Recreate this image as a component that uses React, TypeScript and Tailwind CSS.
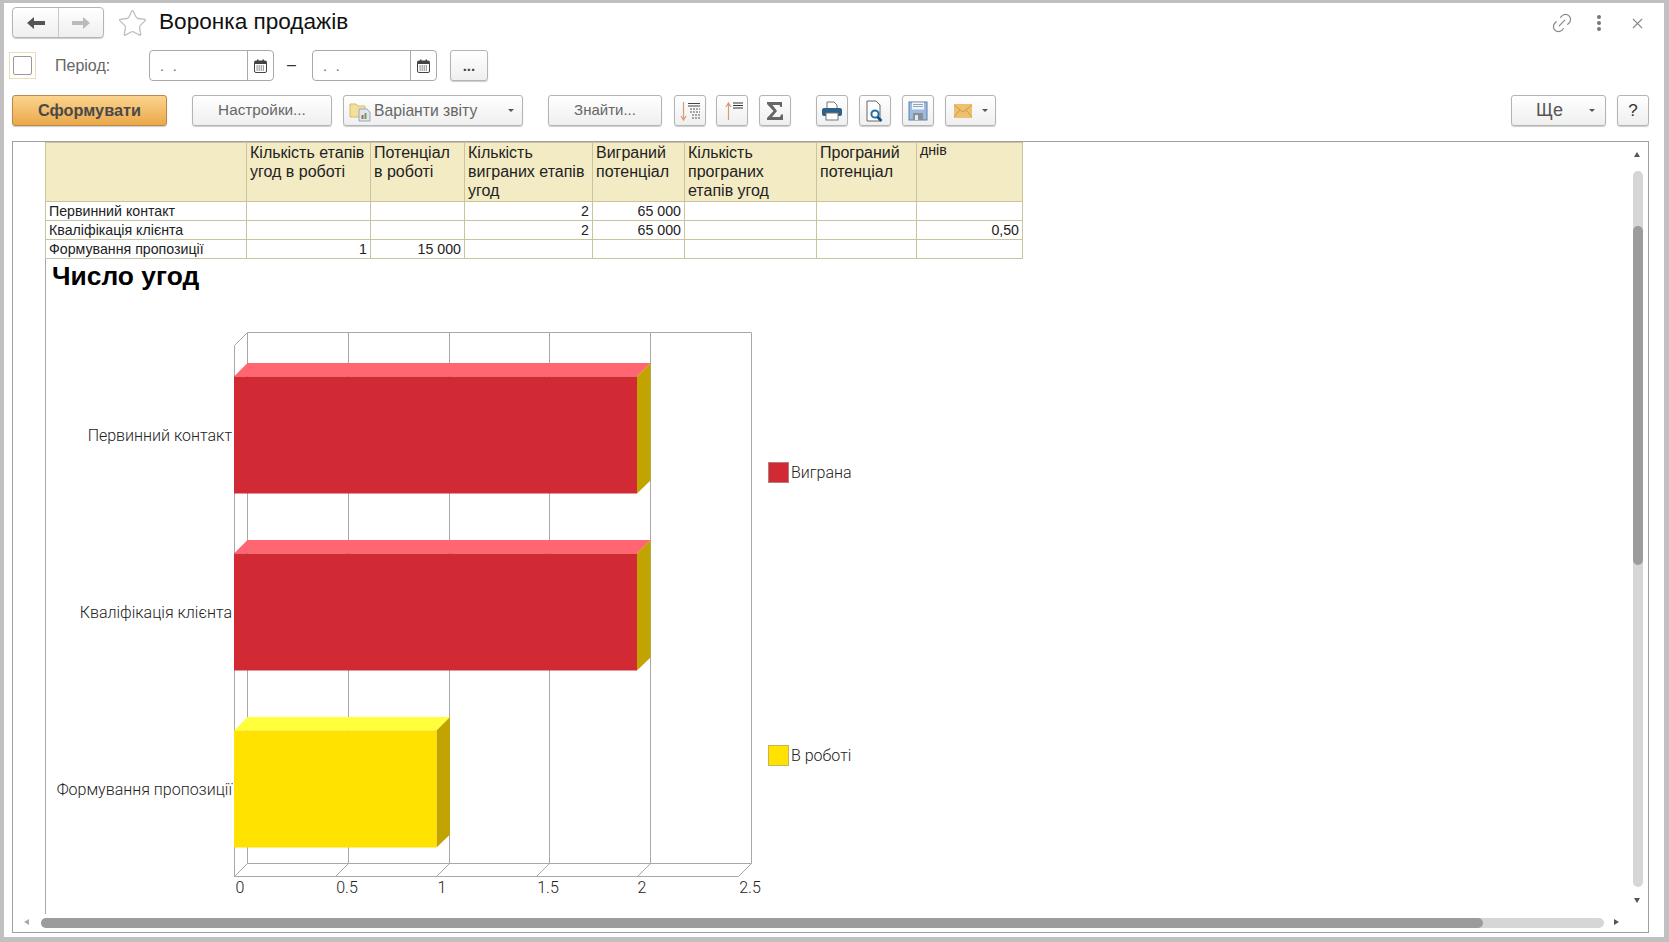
import { ReactNode } from 'react'
import { Link2, Star, X } from 'lucide-react'

const COLS = [201, 124, 94, 128, 92, 132, 100, 106]

const HEADERS = [
  '',
  'Кількість етапів угод в роботі',
  'Потенціал в роботі',
  'Кількість виграних етапів угод',
  'Виграний потенціал',
  'Кількість програних етапів угод',
  'Програний потенціал',
  'днів',
]

const ROWS = [
  ['Первинний контакт', '', '', '2', '65 000', '', '', ''],
  ['Кваліфікація клієнта', '', '', '2', '65 000', '', '', '0,50'],
  ['Формування пропозиції', '1', '15 000', '', '', '', '', ''],
]

const BARS = [
  { y: 376.5, right: 637, front: '#d22a35', top: '#ff6672', side: '#c2a400', label: 'Первинний контакт' },
  { y: 553.5, right: 637, front: '#d22a35', top: '#ff6672', side: '#c2a400', label: 'Кваліфікація клієнта' },
  { y: 730.5, right: 436.5, front: '#ffe200', top: '#ffff3c', side: '#c2a400', label: 'Формування пропозиції' },
]

const TICKS = [
  { label: '0', x: 240 },
  { label: '0.5', x: 347 },
  { label: '1', x: 442 },
  { label: '1.5', x: 548 },
  { label: '2', x: 642 },
  { label: '2.5', x: 750 },
]

function Btn({ className = '', children }: { className?: string; children?: ReactNode }) {
  return (
    <div
      className={`flex h-[31px] items-center rounded-[3px] border border-[#b4b4b4] bg-gradient-to-b from-white to-[#efefef] shadow-[0_1px_1px_rgba(0,0,0,.2)] ${className}`}
    >
      {children}
    </div>
  )
}

function Caret() {
  return <span className="h-0 w-0 border-x-[3px] border-t-[3px] border-x-transparent border-t-[#555]" />
}

function CalendarIcon() {
  return (
    <svg width="13" height="14" viewBox="0 0 13 14">
      <rect x="0.5" y="2" width="12" height="11.5" rx="1.5" fill="#fff" stroke="#444" />
      <rect x="0.5" y="2" width="12" height="3" fill="#444" />
      <rect x="3" y="0.5" width="1.5" height="3" fill="#444" />
      <rect x="8.5" y="0.5" width="1.5" height="3" fill="#444" />
      <path d="M2.5 7h8M2.5 9h8M2.5 11h8" stroke="#444" strokeDasharray="1.2 0.9" />
    </svg>
  )
}

function DateInput() {
  return (
    <div className="flex h-[31px] w-[125px] rounded-[4px] border border-[#a9a9a9] bg-white">
      <div className="flex-1 pl-[10px] pt-[5px] text-[14px] leading-5 tracking-[2.5px] text-[#666]">. .</div>
      <div className="flex w-[26px] items-center justify-center border-l border-[#a9a9a9]">
        <CalendarIcon />
      </div>
    </div>
  )
}

function NavArrow({ flip, color }: { flip?: boolean; color: string }) {
  return (
    <svg width="18" height="14" viewBox="0 0 18 14" className={flip ? 'rotate-180' : ''}>
      <path d="M0 7l7-6v4h11v4H7v4z" fill={color} />
    </svg>
  )
}

function SortDownIcon() {
  return (
    <svg width="24" height="24" viewBox="0 0 24 24">
      <path d="M5.5 3v17M3 17l2.5 4L8 17" fill="none" stroke="#d99a78" strokeWidth="1.2" />
      <path d="M10 4.5h12M10 7h12" stroke="#444" strokeWidth="1.2" />
      <path d="M12 10h10M12 13h10M14 16h8M14 19h8" stroke="#555" strokeWidth="1.1" strokeDasharray="2 1" />
    </svg>
  )
}

function SortUpIcon() {
  return (
    <svg width="24" height="24" viewBox="0 0 24 24">
      <path d="M8.5 21V4M6 8l2.5-4L11 8" fill="none" stroke="#d99a78" strokeWidth="1.2" />
      <path d="M13 4h10M13 6.5h10M13 9h10" stroke="#333" strokeWidth="1.2" />
    </svg>
  )
}

function SumIcon() {
  return (
    <svg width="18" height="20" viewBox="0 0 18 20">
      <path d="M1 1h15v5h-1.5l-1-2H6.5L11 10l-5 6h8l1-2.5H17V19H1v-2l6.5-7L1 3z" fill="#666" />
    </svg>
  )
}

function PrintIcon() {
  return (
    <svg width="22" height="22" viewBox="0 0 22 22">
      <path d="M6 2h7l3 3v5H6z" fill="#fff" stroke="#777" />
      <rect x="1" y="8" width="20" height="8" rx="2" fill="#2f5f88" />
      <rect x="5" y="13" width="12" height="7" fill="#fff" stroke="#777" />
    </svg>
  )
}

function PreviewIcon() {
  return (
    <svg width="22" height="24" viewBox="0 0 22 24">
      <path d="M3 2h9l4 4v16H3z" fill="#fff" stroke="#666" />
      <circle cx="11" cy="15" r="3.6" fill="#fff" stroke="#1f6fa8" strokeWidth="2" />
      <path d="M13.5 18l4 4" stroke="#174e78" strokeWidth="2.6" />
    </svg>
  )
}

function SaveIcon() {
  return (
    <svg width="20" height="20" viewBox="0 0 20 20">
      <rect x="1" y="1" width="18" height="18" fill="#9dbbe0" stroke="#5c7ea8" />
      <rect x="4" y="1.5" width="12" height="7" fill="#f4f6f8" />
      <path d="M5 3.5h10M5 5.5h10" stroke="#8aa6c6" />
      <rect x="5" y="12" width="10" height="7" fill="#8a8f96" />
      <rect x="7" y="14" width="3" height="5" fill="#e8e8e8" />
    </svg>
  )
}

function MailIcon() {
  return (
    <svg width="18" height="14" viewBox="0 0 18 14">
      <rect x="0" y="0" width="18" height="14" fill="#eec170" />
      <path d="M0 1l9 7 9-7M0 13l6-7M18 13l-6-7" fill="none" stroke="#cf9a45" />
    </svg>
  )
}

function FolderIcon() {
  return (
    <svg width="22" height="22" viewBox="0 0 22 22">
      <path d="M1 4h6l2 2h7v11H1z" fill="#f1df9a" stroke="#d3bd72" />
      <path d="M10 9h8l3 3v9H10z" fill="#dfe6ee" stroke="#9aa8b8" />
      <rect x="12.5" y="15" width="2" height="4" fill="#c05a4a" />
      <rect x="15.5" y="13" width="2" height="6" fill="#6f9c5b" />
    </svg>
  )
}

function Chart() {
  return (
    <svg width="840" height="640" viewBox="45 258 840 640" className="-ml-px block" fontFamily="Roboto, sans-serif" fontWeight="300">
      <g stroke="#a8a8a8" fill="none" strokeWidth="1">
        <path d="M247.5 332.5H751.5V863.5H247.5zM247.5 332.5L234.5 345.5V876.5H738.5L751.5 863.5" />
        <path d="M234.5 876.5L247.5 863.5" />
        {[348.5, 449.5, 549.5, 650.5].map((x) => (
          <path key={x} d={`M${x} 332.5V863.5L${x - 13} 876.5`} />
        ))}
      </g>
      {BARS.map((b) => (
        <g key={b.label}>
          <path d={`M234 ${b.y}L247.5 ${b.y - 13.5}H${b.right + 13.5}L${b.right} ${b.y}z`} fill={b.top} />
          <path d={`M${b.right} ${b.y}L${b.right + 13.5} ${b.y - 13.5}V${b.y + 104}L${b.right} ${b.y + 117}z`} fill={b.side} />
          <rect x="234" y={b.y} width={b.right - 234} height="117" fill={b.front} />
          <text x="232" y={b.y + 64} textAnchor="end" fontSize="16" fill="#222">
            {b.label}
          </text>
        </g>
      ))}
      {TICKS.map((t) => (
        <text key={t.label} x={t.x} y="893" textAnchor="middle" fontSize="16" fill="#222">
          {t.label}
        </text>
      ))}
      <rect x="768.5" y="462.5" width="20" height="20" fill="#d22a35" stroke="#b08080" />
      <text x="791" y="478" fontSize="16" fill="#222">
        Виграна
      </text>
      <rect x="768.5" y="745.5" width="20" height="20" fill="#ffe200" stroke="#c8b45a" />
      <text x="791" y="761" fontSize="16" fill="#222">
        В роботі
      </text>
    </svg>
  )
}

function ReportTable() {
  return (
    <table className="-ml-px w-[977px] table-fixed border-collapse text-[14.2px] leading-[18px] text-[#222]">
      <colgroup>
        {COLS.map((w, i) => (
          <col key={i} style={{ width: w }} />
        ))}
      </colgroup>
      <thead>
        <tr className="h-[59px] bg-[#f3ebc4] align-top">
          {HEADERS.map((h, i) => (
            <th
              key={i}
              className={`border border-[#c9c49c] px-[3px] text-left font-normal ${i === 7 ? 'text-[14.2px] leading-[15px]' : 'text-[16px] leading-[19px]'}`}
            >
              {h}
            </th>
          ))}
        </tr>
      </thead>
      <tbody>
        {ROWS.map((row) => (
          <tr key={row[0]} className="h-[19px]">
            {row.map((c, i) => (
              <td
                key={i}
                className={`overflow-hidden whitespace-nowrap border border-[#c9c49c] px-[3px] py-0 ${i === 0 ? 'text-left' : 'text-right'}`}
              >
                {c}
              </td>
            ))}
          </tr>
        ))}
      </tbody>
    </table>
  )
}

export default function App() {
  return (
    <div className="h-[942px] w-[1669px] overflow-hidden bg-[#c0c0c0] pb-[5px] pl-[4px] pr-[5px] pt-[3px] font-['Liberation_Sans',sans-serif]">
      <div className="flex h-full flex-col bg-white">
        {/* Title bar */}
        <div className="flex h-[47px] items-start pl-[8px] pr-[18px] pt-[4px]">
          <div className="flex h-[31px] w-[92px] rounded-[4px] border border-[#b4b4b4] bg-gradient-to-b from-white to-[#efefef] shadow-[0_1px_1px_rgba(0,0,0,.2)]">
            <div className="flex w-[46px] items-center justify-center border-r border-[#c8c8c8]">
              <NavArrow color="#555" />
            </div>
            <div className="flex flex-1 items-center justify-center">
              <NavArrow flip color="#bbb" />
            </div>
          </div>
          <Star size={31} strokeWidth={1} className="ml-[13px] mt-[1px] text-[#bdbdbd]" />
          <h1 className="ml-[11px] text-[22.6px] font-normal leading-[30px] text-[#111]">Воронка продажів</h1>
          <div className="ml-auto flex items-center pt-[4px] text-[#888]">
            <Link2 size={24} strokeWidth={1.2} className="-rotate-45" />
            <div className="ml-[23px] flex w-[5px] flex-col gap-[2px]">
              <span className="h-[4px] w-[4px] rounded-full bg-[#777]" />
              <span className="h-[4px] w-[4px] rounded-full bg-[#777]" />
              <span className="h-[4px] w-[4px] rounded-full bg-[#777]" />
            </div>
            <X size={17} strokeWidth={1.5} className="ml-[27px]" />
          </div>
        </div>

        {/* Period row */}
        <div className="flex h-[45px] items-start pl-[5px]">
          <div className="mt-[2px] flex h-[27px] w-[27px] items-center justify-center border border-[#eadfb4]">
            <div className="h-[19px] w-[19px] rounded-[2px] border border-[#999]" />
          </div>
          <span className="ml-[19px] mt-[6px] w-[94px] text-[16px] leading-5 text-[#666]">Період:</span>
          <DateInput />
          <span className="ml-[13px] mr-[16px] mt-[5px] text-[16px] leading-5 text-[#333]">–</span>
          <DateInput />
          <Btn className="ml-[13px] w-[38px] justify-center pt-[2px] text-[15px] font-bold text-[#444]">...</Btn>
        </div>

        {/* Command bar */}
        <div className="flex h-[46px] items-start pl-[8px] pr-[15px] text-[#666]">
          <div className="flex h-[31px] w-[155px] items-center justify-center rounded-[3px] border border-[#b98a48] bg-gradient-to-b from-[#fbd48c] to-[#eba848] text-[16.3px] font-bold text-[#4a4a4a] shadow-[0_1px_1px_rgba(0,0,0,.2)]">
            Сформувати
          </div>
          <Btn className="ml-[25px] w-[140px] justify-center text-[15.3px]">Настройки...</Btn>
          <Btn className="ml-[11px] w-[180px] pl-[5px] pr-[8px] text-[15.7px]">
            <FolderIcon />
            <span className="ml-[3px] flex-1">Варіанти звіту</span>
            <Caret />
          </Btn>
          <Btn className="ml-[25px] w-[114px] justify-center text-[15px]">Знайти...</Btn>
          <Btn className="ml-[12px] w-[32px] justify-center">
            <SortDownIcon />
          </Btn>
          <Btn className="ml-[10px] w-[32px] justify-center">
            <SortUpIcon />
          </Btn>
          <Btn className="ml-[11px] w-[32px] justify-center">
            <SumIcon />
          </Btn>
          <Btn className="ml-[25px] w-[32px] justify-center">
            <PrintIcon />
          </Btn>
          <Btn className="ml-[11px] w-[32px] justify-center">
            <PreviewIcon />
          </Btn>
          <Btn className="ml-[11px] w-[32px] justify-center">
            <SaveIcon />
          </Btn>
          <Btn className="ml-[11px] w-[51px] justify-center gap-[10px]">
            <MailIcon />
            <Caret />
          </Btn>
          <Btn className="ml-auto w-[95px] pl-[24px] pr-[10px] text-[#555]">
            <span className="flex-1 text-[18px]">Ще</span>
            <Caret />
          </Btn>
          <Btn className="ml-[11px] w-[32px] justify-center text-[17px] text-[#333]">?</Btn>
        </div>

        {/* Report panel */}
        <div className="relative mb-[4px] ml-[8px] mr-[15px] flex-1 overflow-hidden border border-[#a0a0a0]">
          <div className="ml-[32px] h-[772px] border-l border-[#a8a8a8]">
            <ReportTable />
            <div className="pl-[6px] pt-[1px] text-[26.4px] font-bold leading-[32px] text-black">Число угод</div>
            <div className="-mt-[34px]">
              <Chart />
            </div>
          </div>

          {/* Scrollbars */}
          <span className="absolute right-[8px] top-[10px] h-0 w-0 border-x-[3px] border-b-[5px] border-x-transparent border-b-[#555]" />
          <div className="absolute bottom-[45px] right-[5px] top-[29px] w-[10px] rounded-full bg-[#d6d6d6]">
            <div className="mt-[55px] h-[339px] rounded-full bg-[#9c9c9c]" />
          </div>
          <span className="absolute bottom-[29px] right-[8px] h-0 w-0 border-x-[3px] border-t-[5px] border-x-transparent border-t-[#555]" />

          <span className="absolute bottom-[7px] left-[11px] h-0 w-0 border-y-[3px] border-r-[5px] border-y-transparent border-r-[#aaa]" />
          <div className="absolute bottom-[4px] left-[28px] h-[10px] w-[1563px] rounded-full bg-[#d6d6d6]">
            <div className="h-full w-[1442px] rounded-full bg-[#9c9c9c]" />
          </div>
          <span className="absolute bottom-[7px] right-[29px] h-0 w-0 border-y-[3px] border-l-[5px] border-y-transparent border-l-[#555]" />
        </div>
      </div>
    </div>
  )
}
